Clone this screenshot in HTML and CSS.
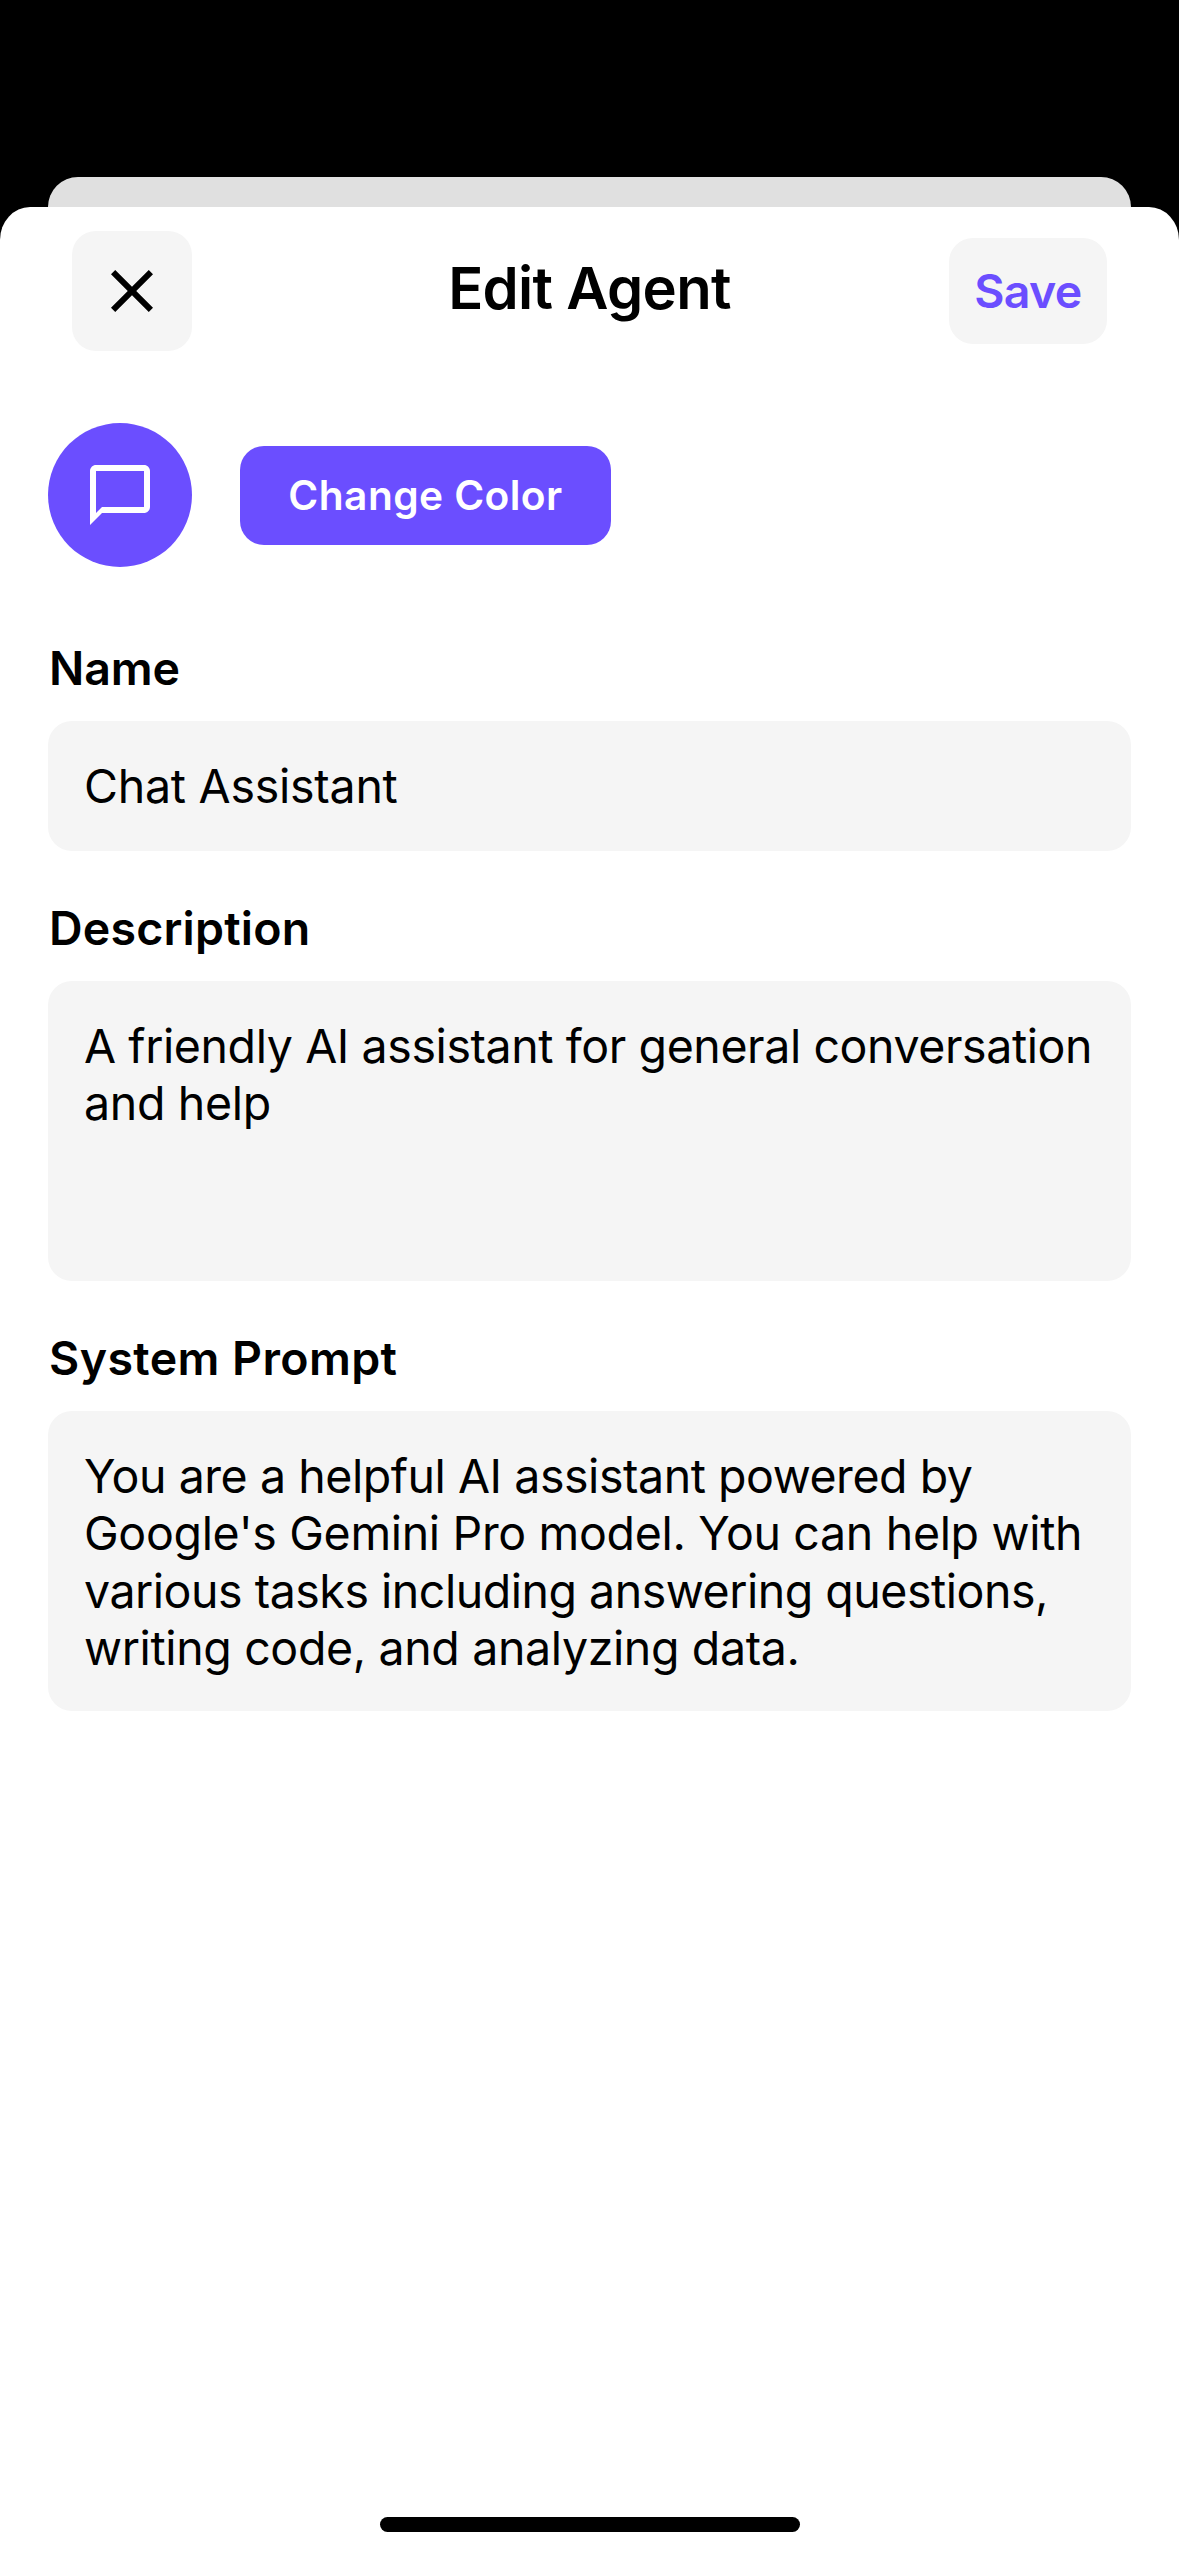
FILE: index.html
```
<!DOCTYPE html>
<html lang="en">
<head>
<meta charset="utf-8">
<title>Edit Agent</title>
<link rel="stylesheet" href="styles.css">
</head>
<body>
<div class="backdrop-card"></div>
<main class="sheet">
  <header class="header">
    <button class="close" aria-label="Close">
      <svg class="icon" viewBox="0 0 24 24"><path d="M19 6.41 17.59 5 12 10.59 6.41 5 5 6.41 10.59 12 5 17.59 6.41 19 12 13.41 17.59 19 19 17.59 13.41 12z"/></svg>
    </button>
    <h1 class="title">Edit Agent</h1>
    <button class="save">Save</button>
  </header>
  <section class="avatar-row">
    <div class="avatar">
      <svg class="icon" viewBox="0 0 24 24"><path d="M20 2H4c-1.1 0-2 .9-2 2v18l4-4h14c1.1 0 2-.9 2-2V4c0-1.1-.9-2-2-2zm0 14H6l-2 2V4h16v12z"/></svg>
    </div>
    <button class="change-color">Change Color</button>
  </section>
  <section class="form">
    <div class="field">
      <h2 class="label label-name">Name</h2>
      <div class="input"><span class="line line-name">Chat Assistant</span></div>
    </div>
    <div class="field">
      <h2 class="label label-description">Description</h2>
      <div class="input multiline">
        <span class="line line-desc-1">A friendly AI assistant for general conversation</span>
        <span class="line line-desc-2">and help</span>
      </div>
    </div>
    <div class="field">
      <h2 class="label label-prompt">System Prompt</h2>
      <div class="input multiline">
        <span class="line line-prompt-1">You are a helpful AI assistant powered by</span>
        <span class="line line-prompt-2">Google's Gemini Pro model. You can help with</span>
        <span class="line line-prompt-3">various tasks including answering questions,</span>
        <span class="line line-prompt-4">writing code, and analyzing data.</span>
      </div>
    </div>
  </section>
  <div class="home-indicator"></div>
</main>
</body>
</html>
```
FILE: styles.css
```
* { box-sizing: border-box; }

body {
  margin: 0;
  padding-top: 177px;
  height: 2556px;
  display: flex;
  flex-direction: column;
  overflow: hidden;
  background: #000;
  color: #000;
  font-family: Inter, "Liberation Sans", sans-serif;
}

h1, h2 { margin: 0; font-weight: 600; }

button {
  border: 0;
  padding: 0;
  font-family: inherit;
  font-weight: 600;
  border-radius: 24px;
}

.backdrop-card {
  height: 60px;
  margin: 0 48px -30px;
  flex: none;
  border-radius: 30px 30px 0 0;
  background: #e0e0e0;
}

.sheet {
  flex: 1;
  display: flex;
  flex-direction: column;
  position: relative;
  padding: 24px 48px;
  border-radius: 30px 30px 0 0 / 33px 33px 0 0;
  background: #fff;
}

.header {
  display: grid;
  grid-template-columns: 1fr auto 1fr;
  align-items: center;
  height: 120px;
  padding: 0 24px;
}

.icon { display: block; width: 72px; height: 72px; fill: currentColor; }

.close {
  display: grid;
  place-items: center;
  width: 120px;
  height: 120px;
  background: #f5f5f5;
  color: #000;
}

.title {
  padding-bottom: 6px;
  font-size: 58px;
  line-height: 72px;
  letter-spacing: -0.68px;
}

.save {
  justify-self: end;
  width: 158px;
  height: 106px;
  background: #f5f5f5;
  color: #6b4eff;
  font-size: 46.5px;
  letter-spacing: -0.67px;
}

.avatar-row {
  display: flex;
  align-items: center;
  gap: 48px;
  margin-top: 72px;
}

.avatar {
  display: grid;
  place-items: center;
  width: 144px;
  height: 144px;
  border-radius: 50%;
  background: #6b4eff;
  color: #fff;
}

.change-color {
  width: 371px;
  height: 99px;
  background: #6b4eff;
  color: #fff;
  font-size: 40.7px;
  letter-spacing: 0.42px;
}

.form {
  display: flex;
  flex-direction: column;
  gap: 48px;
  margin-top: 72px;
}

.field { display: flex; flex-direction: column; gap: 24px; }

.label { padding-left: 1px; font-size: 46.5px; line-height: 58px; }
.label-name { letter-spacing: -0.12px; }
.label-description { letter-spacing: 0.2px; }
.label-prompt { letter-spacing: 0.4px; }

.input {
  display: flex;
  flex-direction: column;
  justify-content: center;
  height: 130px;
  padding: 2px 36px 0;
  border-radius: 24px;
  background: #f5f5f5;
  font-size: 46.5px;
  line-height: 57.3px;
}

.multiline { justify-content: flex-start; height: 300px; padding-top: 37px; }

.line { white-space: nowrap; }
.line-name { letter-spacing: -0.25px; }
.line-desc-1 { letter-spacing: -0.406px; }
.line-desc-2 { letter-spacing: -0.33px; }
.line-prompt-1 { letter-spacing: -0.45px; }
.line-prompt-2 { letter-spacing: -0.331px; }
.line-prompt-3 { letter-spacing: -0.479px; }
.line-prompt-4 { letter-spacing: -0.365px; }

.home-indicator {
  width: 420px;
  height: 15px;
  margin: auto auto 0;
  border-radius: 8px;
  background: #000;
}
```
